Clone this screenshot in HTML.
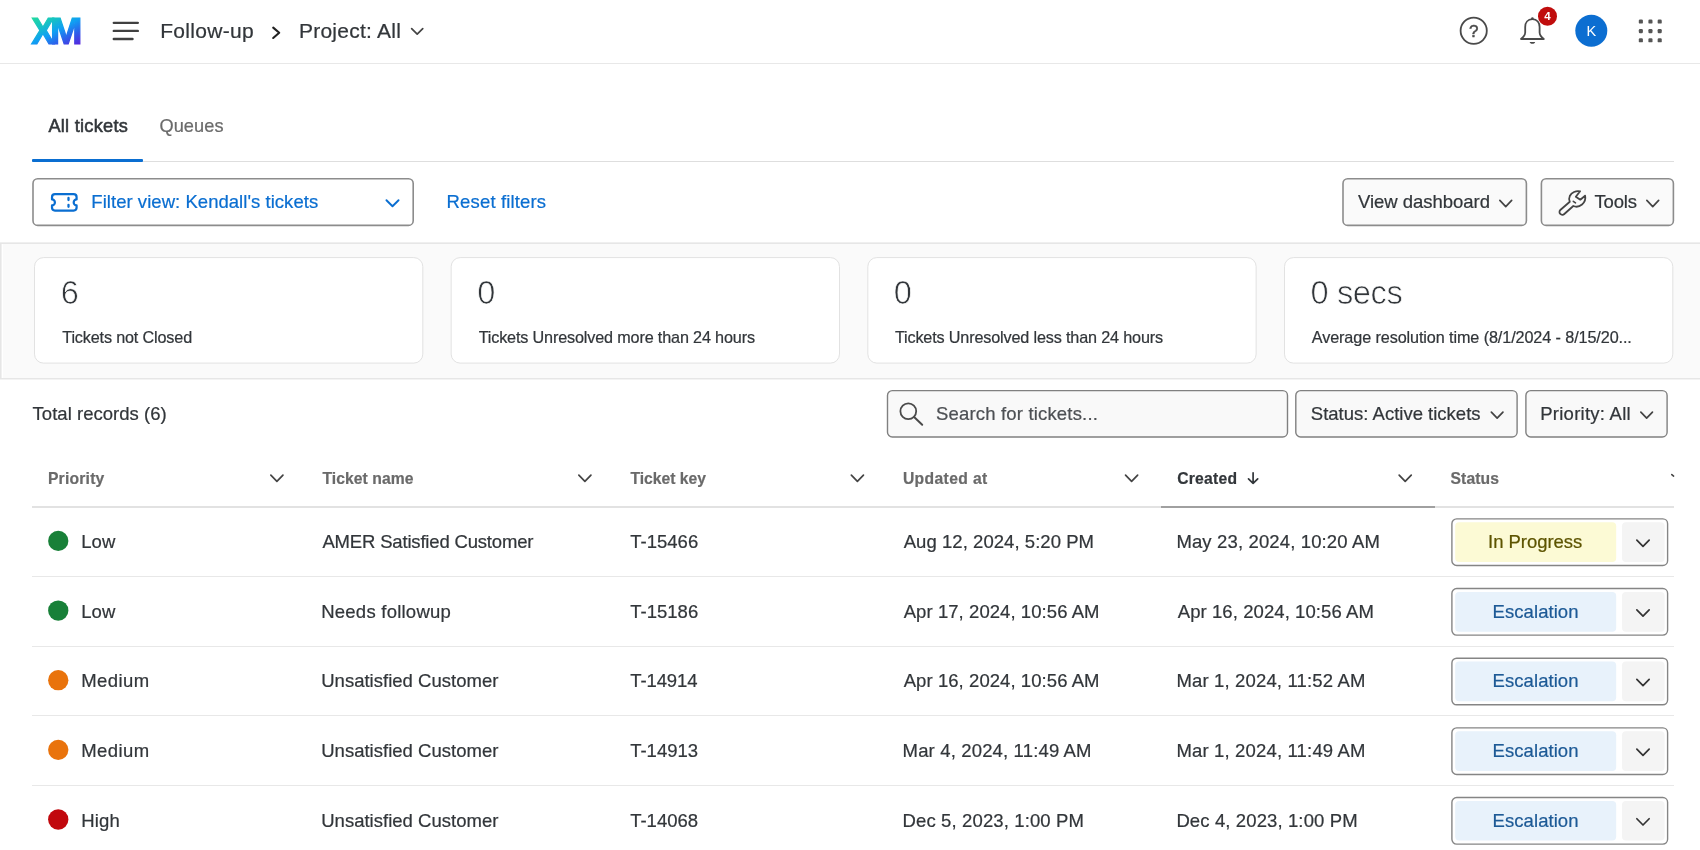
<!DOCTYPE html>
<html lang="en">
<head>
<meta charset="utf-8">
<title>Follow-up - Tickets</title>
<style>
*{box-sizing:border-box;margin:0;padding:0}
html,body{width:1700px;height:850px;overflow:hidden;background:#fff}
body{font-family:"Liberation Sans",sans-serif;color:#32363a;position:relative}
html{filter:grayscale(0)}
.a{position:absolute}
.t{position:absolute;white-space:nowrap;line-height:1}
</style>
</head>
<body>
<div class="a" style="left:0;top:0;width:1700px;height:64px;border-bottom:1px solid #e8e8e8"></div>
<svg class="a" style="left:26px;top:12px" width="60" height="38" viewBox="0 0 60 38">
<defs><linearGradient id="g" gradientUnits="userSpaceOnUse" x1="5" y1="5" x2="27.300" y2="47.200"><stop offset="0" stop-color="#23dc9c"/><stop offset="0.25" stop-color="#16c4c0"/><stop offset="0.5" stop-color="#0fa0f3"/><stop offset="0.75" stop-color="#2f5cea"/><stop offset="1" stop-color="#5a22dc"/></linearGradient></defs>
<g font-family="Liberation Sans, sans-serif" font-weight="bold" font-size="37.100" fill="url(#g)" stroke="url(#g)" stroke-width="1.200" stroke-linejoin="miter"><text id="lx" x="5.200" y="31.500" textLength="23.300" lengthAdjust="spacingAndGlyphs">X</text><text id="lm" x="24" y="31.500" textLength="32.400" lengthAdjust="spacingAndGlyphs">M</text></g></svg>
<svg class="a" style="left:111px;top:20px" width="30" height="22" viewBox="0 0 30 22"><path d="M2.800 2.850H26.800M2.800 10.900H26.800M2.800 19H21.500" stroke="#404040" stroke-width="2.400" stroke-linecap="round" fill="none"/></svg>
<svg class="a" style="left:270px;top:24px" width="13" height="17" viewBox="0 0 13 17"><path d="M3.200 3.600L9.200 8.800L3.200 14" stroke="#222" stroke-width="2.100" fill="none" stroke-linecap="round" stroke-linejoin="round"/></svg>
<svg class="a" style="left:409px;top:26px" width="16" height="11" viewBox="0 0 16 11"><path d="M2.65 2.65L8.20 8.20L13.75 2.65" stroke="#444" stroke-width="1.7" fill="none" stroke-linecap="round" stroke-linejoin="round"/></svg>
<svg class="a" style="left:1458px;top:15px" width="32" height="32" viewBox="0 0 32 32"><circle cx="15.700" cy="15.750" r="13.100" stroke="#4a4a4a" stroke-width="1.800" fill="none"/><text x="15.700" y="22" text-anchor="middle" font-family="Liberation Sans, sans-serif" font-size="17" fill="#4a4a4a" stroke="#4a4a4a" stroke-width="0.500">?</text></svg>
<svg class="a" style="left:1518px;top:15px" width="30" height="31" viewBox="0 0 30 31"><path d="M14.400 4.200C9.600 4.200 7.200 7.800 7.200 12V17.500C7.200 20.500 5.200 22.300 3 24H25.800C23.600 22.300 21.600 20.500 21.600 17.500V12C21.600 7.800 19.200 4.200 14.400 4.200Z" stroke="#4a4a4a" stroke-width="1.800" fill="none" stroke-linejoin="round"/><circle cx="14.400" cy="3.600" r="1.300" fill="#4a4a4a"/><path d="M11.700 26.900H17.100C17.100 28 15.900 28.800 14.400 28.800C12.900 28.800 11.700 28 11.700 26.900Z" fill="#4a4a4a"/></svg>
<svg class="a" style="left:1536px;top:5px" width="24" height="24" viewBox="0 0 24 24"><circle cx="11.500" cy="11.200" r="9.500" fill="#c00d0d"/></svg>
<svg class="a" style="left:1573px;top:12px" width="38" height="38" viewBox="0 0 38 38"><circle cx="18.300" cy="18.700" r="16" fill="#0c6ed1"/></svg>
<svg class="a" style="left:1636px;top:17px" width="28" height="28" viewBox="0 0 28 28" fill="#555"><rect x="2.80" y="2.50" width="4.100" height="4.100" rx="1.200"/><rect x="12.40" y="2.50" width="4.100" height="4.100" rx="1.200"/><rect x="21.65" y="2.50" width="4.100" height="4.100" rx="1.200"/><rect x="2.80" y="12.05" width="4.100" height="4.100" rx="1.200"/><rect x="12.40" y="12.05" width="4.100" height="4.100" rx="1.200"/><rect x="21.65" y="12.05" width="4.100" height="4.100" rx="1.200"/><rect x="2.80" y="21.25" width="4.100" height="4.100" rx="1.200"/><rect x="12.40" y="21.25" width="4.100" height="4.100" rx="1.200"/><rect x="21.65" y="21.25" width="4.100" height="4.100" rx="1.200"/></svg>
<div class="a" style="left:32px;top:161px;width:1642px;height:1px;background:#dedede"></div>
<div class="a" style="left:32px;top:159px;width:111px;height:3px;background:#0a6ed1;border-radius:1px"></div>
<svg class="a" style="left:31px;top:177px" width="384" height="51" viewBox="0 0 384 51"><rect x="2.00" y="1.80" width="380.20" height="46.60" rx="4.70" fill="#fff" stroke="#8c8c8c" stroke-width="1.6"/></svg>
<svg class="a" style="left:49px;top:191px" width="31" height="23" viewBox="0 0 31 23"><path d="M6 3.200H24.600C26.300 3.200 27.600 4.500 27.600 6.200V8.400C26 8.400 24.700 9.800 24.700 11.400C24.700 13 26 14.400 27.600 14.400V16.600C27.600 18.300 26.300 19.600 24.600 19.600H6C4.300 19.600 3 18.300 3 16.600V14.400C4.600 14.400 5.900 13 5.900 11.400C5.900 9.800 4.600 8.400 3 8.400V6.200C3 4.500 4.300 3.200 6 3.200Z" stroke="#0a6ed1" stroke-width="2.200" fill="none" stroke-linejoin="round"/><path d="M19.500 7V9M19.500 13.800V15.800" stroke="#0a6ed1" stroke-width="2.300" stroke-linecap="round"/></svg>
<svg class="a" style="left:384px;top:198px" width="17" height="11" viewBox="0 0 17 11"><path d="M2.45 2.25L8.50 8.27L14.55 2.25" stroke="#0a6ed1" stroke-width="1.9" fill="none" stroke-linecap="round" stroke-linejoin="round"/></svg>
<svg class="a" style="left:1341px;top:177px" width="188" height="51" viewBox="0 0 188 51"><rect x="2.00" y="1.80" width="183.40" height="46.60" rx="4.70" fill="#fafafa" stroke="#8c8c8c" stroke-width="1.6"/></svg>
<svg class="a" style="left:1498px;top:198px" width="16" height="11" viewBox="0 0 16 11"><path d="M1.85 2.45L7.75 8.59L13.65 2.45" stroke="#444" stroke-width="1.7" fill="none" stroke-linecap="round" stroke-linejoin="round"/></svg>
<svg class="a" style="left:1539px;top:177px" width="137" height="51" viewBox="0 0 137 51"><rect x="2.40" y="1.80" width="132.00" height="46.60" rx="4.70" fill="#fafafa" stroke="#8c8c8c" stroke-width="1.6"/></svg>
<svg class="a" style="left:1558px;top:189px" width="30" height="28" viewBox="0 0 30 28"><path d="M22.100 2.300C18 1.300 13.500 3.500 11.800 7C10.900 9 10.900 11 11.800 12.800L2.300 21C1.200 22 1.200 23.800 2.300 24.900C3.400 26 5.200 26.100 6.300 25L15.300 17C18 18.200 21.500 17.600 24 15.500C26.500 13.300 27.800 9.800 27.100 6.700L22.300 10.700L17.800 7.700Z" stroke="#444" stroke-width="1.800" fill="none" stroke-linejoin="round"/><path d="M15.300 12.300L17.500 13.900" stroke="#444" stroke-width="1.600" stroke-linecap="round"/></svg>
<svg class="a" style="left:1645px;top:198px" width="16" height="11" viewBox="0 0 16 11"><path d="M1.85 2.45L7.75 8.59L13.65 2.45" stroke="#444" stroke-width="1.7" fill="none" stroke-linecap="round" stroke-linejoin="round"/></svg>
<div class="a" style="left:0;top:242px;width:1700px;height:138px;background:#fafafa"></div>
<div class="a" style="left:0;top:242px;width:1700px;height:1px;background:#efefef"></div>
<div class="a" style="left:0;top:243px;width:1700px;height:1px;background:#e6e6e6"></div>
<div class="a" style="left:0;top:378px;width:1700px;height:1px;background:#e6e6e6"></div>
<div class="a" style="left:0;top:379px;width:1700px;height:1px;background:#f3f3f3"></div>
<div class="a" style="left:0;top:244px;width:1px;height:134px;background:#e6e6e6"></div>
<div class="a" style="left:1px;top:244px;width:1px;height:134px;background:#f0f0f0"></div>
<div class="a" style="left:2px;top:244px;width:1px;height:134px;background:#fff"></div>
<svg class="a" style="left:33px;top:256px" width="392" height="109" viewBox="0 0 392 109"><rect x="1.50" y="1.60" width="388.30" height="105.50" rx="9.00" fill="#fff" stroke="#e2e2e2" stroke-width="1"/></svg>
<svg class="a" style="left:449px;top:256px" width="392" height="109" viewBox="0 0 392 109"><rect x="2.17" y="1.60" width="388.30" height="105.50" rx="9.00" fill="#fff" stroke="#e2e2e2" stroke-width="1"/></svg>
<svg class="a" style="left:866px;top:256px" width="392" height="109" viewBox="0 0 392 109"><rect x="1.84" y="1.60" width="388.30" height="105.50" rx="9.00" fill="#fff" stroke="#e2e2e2" stroke-width="1"/></svg>
<svg class="a" style="left:1283px;top:256px" width="392" height="109" viewBox="0 0 392 109"><rect x="1.51" y="1.60" width="388.30" height="105.50" rx="9.00" fill="#fff" stroke="#e2e2e2" stroke-width="1"/></svg>
<svg class="a" style="left:885px;top:388px" width="405" height="51" viewBox="0 0 405 51"><rect x="2.50" y="2.60" width="400.00" height="46.40" rx="4.80" fill="#f9f9f9" stroke="#808080" stroke-width="1.4"/></svg>
<svg class="a" style="left:898px;top:401px" width="27" height="27" viewBox="0 0 27 27"><circle cx="10.300" cy="10.200" r="7.900" stroke="#4a4a4a" stroke-width="1.800" fill="none"/><path d="M16.100 16.100L24.200 23.700" stroke="#4a4a4a" stroke-width="2" stroke-linecap="round"/></svg>
<svg class="a" style="left:1294px;top:388px" width="225" height="51" viewBox="0 0 225 51"><rect x="1.80" y="2.60" width="221.30" height="46.40" rx="4.80" fill="#f9f9f9" stroke="#808080" stroke-width="1.4"/></svg>
<svg class="a" style="left:1489px;top:410px" width="16" height="11" viewBox="0 0 16 11"><path d="M2.35 2.05L8.15 8.09L13.95 2.05" stroke="#444" stroke-width="1.7" fill="none" stroke-linecap="round" stroke-linejoin="round"/></svg>
<svg class="a" style="left:1524px;top:388px" width="145" height="51" viewBox="0 0 145 51"><rect x="1.90" y="2.60" width="141.20" height="46.40" rx="4.80" fill="#f9f9f9" stroke="#808080" stroke-width="1.4"/></svg>
<svg class="a" style="left:1639px;top:410px" width="16" height="11" viewBox="0 0 16 11"><path d="M1.85 2.05L7.65 8.09L13.45 2.05" stroke="#444" stroke-width="1.7" fill="none" stroke-linecap="round" stroke-linejoin="round"/></svg>
<svg class="a" style="left:269px;top:473px" width="16" height="11" viewBox="0 0 16 11"><path d="M1.85 2.15L7.90 8.40L13.95 2.15" stroke="#444" stroke-width="1.7" fill="none" stroke-linecap="round" stroke-linejoin="round"/></svg>
<svg class="a" style="left:577px;top:473px" width="16" height="11" viewBox="0 0 16 11"><path d="M1.85 2.15L7.90 8.40L13.95 2.15" stroke="#444" stroke-width="1.7" fill="none" stroke-linecap="round" stroke-linejoin="round"/></svg>
<svg class="a" style="left:849px;top:473px" width="17" height="11" viewBox="0 0 17 11"><path d="M2.35 2.15L8.40 8.40L14.45 2.15" stroke="#444" stroke-width="1.7" fill="none" stroke-linecap="round" stroke-linejoin="round"/></svg>
<svg class="a" style="left:1123px;top:473px" width="17" height="11" viewBox="0 0 17 11"><path d="M2.55 2.15L8.60 8.40L14.65 2.15" stroke="#444" stroke-width="1.7" fill="none" stroke-linecap="round" stroke-linejoin="round"/></svg>
<svg class="a" style="left:1397px;top:473px" width="17" height="11" viewBox="0 0 17 11"><path d="M2.15 2.15L8.20 8.40L14.25 2.15" stroke="#444" stroke-width="1.7" fill="none" stroke-linecap="round" stroke-linejoin="round"/></svg>
<svg class="a" style="left:1246px;top:470px" width="14" height="16" viewBox="0 0 14 16"><path d="M7.100 2.800V13.300M2.500 8.800L7.100 13.400L11.700 8.800" stroke="#32363a" stroke-width="1.700" fill="none" stroke-linecap="round" stroke-linejoin="round"/></svg>
<svg class="a" style="left:1669px;top:472px" width="7" height="7" viewBox="0 0 7 7"><path d="M2.800 2.600L4.600 4.100" stroke="#444" stroke-width="1.600" stroke-linecap="round"/></svg>
<div class="a" style="left:32px;top:506px;width:1642px;height:2px;background:#e2e2e2"></div>
<div class="a" style="left:1161px;top:506px;width:274px;height:2px;background:#a0a0a0"></div>
<div class="a" style="left:32px;top:576px;width:1642px;height:1px;background:#e8e8e8"></div>
<div class="a" style="left:32px;top:646px;width:1642px;height:1px;background:#e8e8e8"></div>
<div class="a" style="left:32px;top:715px;width:1642px;height:1px;background:#e8e8e8"></div>
<div class="a" style="left:32px;top:785px;width:1642px;height:1px;background:#e8e8e8"></div>
<svg class="a" style="left:46px;top:528px" width="26" height="27" viewBox="0 0 26 27"><circle cx="12.250" cy="12.90" r="10.150" fill="#188038"/></svg>
<svg class="a" style="left:1450px;top:517px" width="220" height="51" viewBox="0 0 220 51"><rect x="1.90" y="1.90" width="215.70" height="46.60" rx="4.80" fill="#fff" stroke="#858585" stroke-width="1.4"/><rect x="5.20" y="5.30" width="161.00" height="39.70" rx="4" fill="#fcfad5"/><rect x="172.00" y="5.30" width="42.60" height="39.70" rx="4" fill="#f4f4f4"/></svg>
<svg class="a" style="left:1635px;top:538px" width="16" height="11" viewBox="0 0 16 11"><path d="M1.85 2.15L8.00 8.39L14.15 2.15" stroke="#333" stroke-width="1.7" fill="none" stroke-linecap="round" stroke-linejoin="round"/></svg>
<svg class="a" style="left:46px;top:597px" width="26" height="27" viewBox="0 0 26 27"><circle cx="12.250" cy="13.55" r="10.150" fill="#188038"/></svg>
<svg class="a" style="left:1450px;top:586px" width="220" height="51" viewBox="0 0 220 51"><rect x="1.90" y="2.55" width="215.70" height="46.60" rx="4.80" fill="#fff" stroke="#858585" stroke-width="1.4"/><rect x="5.20" y="5.95" width="161.00" height="39.70" rx="4" fill="#e8f2fb"/><rect x="172.00" y="5.95" width="42.60" height="39.70" rx="4" fill="#f4f4f4"/></svg>
<svg class="a" style="left:1635px;top:607px" width="16" height="12" viewBox="0 0 16 12"><path d="M1.85 2.80L8.00 9.04L14.15 2.80" stroke="#333" stroke-width="1.7" fill="none" stroke-linecap="round" stroke-linejoin="round"/></svg>
<svg class="a" style="left:46px;top:667px" width="26" height="27" viewBox="0 0 26 27"><circle cx="12.250" cy="13.20" r="10.150" fill="#e9730c"/></svg>
<svg class="a" style="left:1450px;top:656px" width="220" height="51" viewBox="0 0 220 51"><rect x="1.90" y="2.20" width="215.70" height="46.60" rx="4.80" fill="#fff" stroke="#858585" stroke-width="1.4"/><rect x="5.20" y="5.60" width="161.00" height="39.70" rx="4" fill="#e8f2fb"/><rect x="172.00" y="5.60" width="42.60" height="39.70" rx="4" fill="#f4f4f4"/></svg>
<svg class="a" style="left:1635px;top:677px" width="16" height="11" viewBox="0 0 16 11"><path d="M1.85 2.45L8.00 8.69L14.15 2.45" stroke="#333" stroke-width="1.7" fill="none" stroke-linecap="round" stroke-linejoin="round"/></svg>
<svg class="a" style="left:46px;top:736px" width="26" height="27" viewBox="0 0 26 27"><circle cx="12.250" cy="13.85" r="10.150" fill="#e9730c"/></svg>
<svg class="a" style="left:1450px;top:726px" width="220" height="51" viewBox="0 0 220 51"><rect x="1.90" y="1.85" width="215.70" height="46.60" rx="4.80" fill="#fff" stroke="#858585" stroke-width="1.4"/><rect x="5.20" y="5.25" width="161.00" height="39.70" rx="4" fill="#e8f2fb"/><rect x="172.00" y="5.25" width="42.60" height="39.70" rx="4" fill="#f4f4f4"/></svg>
<svg class="a" style="left:1635px;top:747px" width="16" height="11" viewBox="0 0 16 11"><path d="M1.85 2.10L8.00 8.34L14.15 2.10" stroke="#333" stroke-width="1.7" fill="none" stroke-linecap="round" stroke-linejoin="round"/></svg>
<svg class="a" style="left:46px;top:806px" width="26" height="27" viewBox="0 0 26 27"><circle cx="12.250" cy="13.50" r="10.150" fill="#c1080d"/></svg>
<svg class="a" style="left:1450px;top:795px" width="220" height="51" viewBox="0 0 220 51"><rect x="1.90" y="2.50" width="215.70" height="46.60" rx="4.80" fill="#fff" stroke="#858585" stroke-width="1.4"/><rect x="5.20" y="5.90" width="161.00" height="39.70" rx="4" fill="#e8f2fb"/><rect x="172.00" y="5.90" width="42.60" height="39.70" rx="4" fill="#f4f4f4"/></svg>
<svg class="a" style="left:1635px;top:816px" width="16" height="12" viewBox="0 0 16 12"><path d="M1.85 2.75L8.00 8.99L14.15 2.75" stroke="#333" stroke-width="1.7" fill="none" stroke-linecap="round" stroke-linejoin="round"/></svg>
<div class="t" style="left:1538px;top:7px;width:19px;height:19px;line-height:19px;text-align:center;color:#fff;font-size:11.500px;font-weight:bold">4</div>
<div class="t" style="left:1575px;top:15px;width:32.600px;height:32px;line-height:32px;text-align:center;color:#fff;font-size:14.500px">K</div>
<div class="t" id="h1" style="left:160.18px;top:20.26px;font-size:21px;color:#32363a;letter-spacing:0.317px;-webkit-text-stroke:0.22px #32363a;">Follow-up</div>
<div class="t" id="h2" style="left:298.91px;top:20.26px;font-size:21px;color:#32363a;letter-spacing:0.259px;-webkit-text-stroke:0.22px #32363a;">Project: All</div>
<div class="t" id="tab1" style="left:48.43px;top:117.26px;font-size:18.2px;color:#32363a;letter-spacing:0.260px;-webkit-text-stroke:0.55px #32363a;">All tickets</div>
<div class="t" id="tab2" style="left:159.44px;top:117.26px;font-size:18.2px;color:#6b6b6b;letter-spacing:0.087px;-webkit-text-stroke:0.22px #6b6b6b;">Queues</div>
<div class="t" id="f1" style="left:91.33px;top:193.26px;font-size:18.5px;color:#0a6ed1;letter-spacing:0.042px;-webkit-text-stroke:0.22px #0a6ed1;">Filter view: Kendall's tickets</div>
<div class="t" id="f2" style="left:446.60px;top:193.26px;font-size:18.5px;color:#0a6ed1;letter-spacing:0.155px;-webkit-text-stroke:0.22px #0a6ed1;">Reset filters</div>
<div class="t" id="f3" style="left:1358.02px;top:193.26px;font-size:18.5px;color:#32363a;letter-spacing:-0.032px;-webkit-text-stroke:0.22px #32363a;">View dashboard</div>
<div class="t" id="f4" style="left:1594.39px;top:193.26px;font-size:18.5px;color:#32363a;letter-spacing:-0.115px;-webkit-text-stroke:0.22px #32363a;">Tools</div>
<div class="t" id="n1" style="left:60.63px;top:277.26px;font-size:32.6px;color:#32363a;letter-spacing:0.000px;-webkit-text-stroke:0.7px #fff;">6</div>
<div class="t" id="n2" style="left:477.24px;top:277.26px;font-size:32.6px;color:#32363a;letter-spacing:0.000px;-webkit-text-stroke:0.7px #fff;">0</div>
<div class="t" id="n3" style="left:893.66px;top:277.26px;font-size:32.6px;color:#32363a;letter-spacing:0.000px;-webkit-text-stroke:0.7px #fff;">0</div>
<div class="t" id="n4" style="left:1310.53px;top:277.26px;font-size:32.6px;color:#32363a;letter-spacing:-0.368px;-webkit-text-stroke:0.7px #fff;">0 secs</div>
<div class="t" id="l1" style="left:62.25px;top:329.26px;font-size:16.2px;color:#32363a;letter-spacing:-0.156px;-webkit-text-stroke:0.22px #32363a;">Tickets not Closed</div>
<div class="t" id="l2" style="left:478.68px;top:329.26px;font-size:16.2px;color:#32363a;letter-spacing:-0.156px;-webkit-text-stroke:0.22px #32363a;">Tickets Unresolved more than 24 hours</div>
<div class="t" id="l3" style="left:894.91px;top:329.26px;font-size:16.2px;color:#32363a;letter-spacing:-0.157px;-webkit-text-stroke:0.22px #32363a;">Tickets Unresolved less than 24 hours</div>
<div class="t" id="l4" style="left:1311.79px;top:329.26px;font-size:16.2px;color:#32363a;letter-spacing:-0.100px;-webkit-text-stroke:0.22px #32363a;">Average resolution time (8/1/2024 - 8/15/20...</div>
<div class="t" id="s0" style="left:32.58px;top:405.26px;font-size:18.5px;color:#32363a;letter-spacing:0.026px;-webkit-text-stroke:0.22px #32363a;">Total records (6)</div>
<div class="t" id="s1" style="left:935.94px;top:405.26px;font-size:18.5px;color:#4d5054;letter-spacing:0.179px;-webkit-text-stroke:0.22px #4d5054;">Search for tickets...</div>
<div class="t" id="s2" style="left:1310.83px;top:405.26px;font-size:18.5px;color:#32363a;letter-spacing:0.002px;-webkit-text-stroke:0.22px #32363a;">Status: Active tickets</div>
<div class="t" id="s3" style="left:1540.22px;top:405.26px;font-size:18.5px;color:#32363a;letter-spacing:0.254px;-webkit-text-stroke:0.22px #32363a;">Priority: All</div>
<div class="t" id="th1" style="left:47.92px;top:471.26px;font-size:15.7px;color:#6a6a6a;letter-spacing:0.208px;font-weight:bold;-webkit-text-stroke:0.2px #6a6a6a;">Priority</div>
<div class="t" id="th2" style="left:322.42px;top:471.26px;font-size:15.7px;color:#6a6a6a;letter-spacing:0.061px;font-weight:bold;-webkit-text-stroke:0.2px #6a6a6a;">Ticket name</div>
<div class="t" id="th3" style="left:630.42px;top:471.26px;font-size:15.7px;color:#6a6a6a;letter-spacing:-0.012px;font-weight:bold;-webkit-text-stroke:0.2px #6a6a6a;">Ticket key</div>
<div class="t" id="th4" style="left:902.92px;top:471.26px;font-size:15.7px;color:#6a6a6a;letter-spacing:0.363px;font-weight:bold;-webkit-text-stroke:0.2px #6a6a6a;">Updated at</div>
<div class="t" id="th5" style="left:1177.20px;top:471.26px;font-size:15.7px;color:#32363a;letter-spacing:0.227px;font-weight:bold;-webkit-text-stroke:0.2px #32363a;">Created</div>
<div class="t" id="th6" style="left:1450.55px;top:471.26px;font-size:15.7px;color:#6a6a6a;letter-spacing:0.074px;font-weight:bold;-webkit-text-stroke:0.2px #6a6a6a;">Status</div>
<div class="t" id="r0p" style="left:81.21px;top:533.26px;font-size:18.5px;color:#32363a;letter-spacing:0.120px;-webkit-text-stroke:0.22px #32363a;">Low</div>
<div class="t" id="r0n" style="left:322.45px;top:533.26px;font-size:18.5px;color:#32363a;letter-spacing:-0.177px;-webkit-text-stroke:0.22px #32363a;">AMER Satisfied Customer</div>
<div class="t" id="r0k" style="left:630.22px;top:533.26px;font-size:18.5px;color:#32363a;letter-spacing:0.015px;-webkit-text-stroke:0.22px #32363a;">T-15466</div>
<div class="t" id="r0u" style="left:903.73px;top:533.26px;font-size:18.5px;color:#32363a;letter-spacing:0.052px;-webkit-text-stroke:0.22px #32363a;">Aug 12, 2024, 5:20 PM</div>
<div class="t" id="r0c" style="left:1176.39px;top:533.26px;font-size:18.5px;color:#32363a;letter-spacing:0.141px;-webkit-text-stroke:0.22px #32363a;">May 23, 2024, 10:20 AM</div>
<div class="t" id="r0s" style="left:1488.05px;top:533.26px;font-size:18.5px;color:#5d5400;letter-spacing:-0.042px;-webkit-text-stroke:0.22px #5d5400;">In Progress</div>
<div class="t" id="r1p" style="left:81.21px;top:603.26px;font-size:18.5px;color:#32363a;letter-spacing:0.120px;-webkit-text-stroke:0.22px #32363a;">Low</div>
<div class="t" id="r1n" style="left:321.21px;top:603.26px;font-size:18.5px;color:#32363a;letter-spacing:0.240px;-webkit-text-stroke:0.22px #32363a;">Needs followup</div>
<div class="t" id="r1k" style="left:630.22px;top:603.26px;font-size:18.5px;color:#32363a;letter-spacing:0.015px;-webkit-text-stroke:0.22px #32363a;">T-15186</div>
<div class="t" id="r1u" style="left:903.73px;top:603.26px;font-size:18.5px;color:#32363a;letter-spacing:0.066px;-webkit-text-stroke:0.22px #32363a;">Apr 17, 2024, 10:56 AM</div>
<div class="t" id="r1c" style="left:1177.73px;top:603.26px;font-size:18.5px;color:#32363a;letter-spacing:0.084px;-webkit-text-stroke:0.22px #32363a;">Apr 16, 2024, 10:56 AM</div>
<div class="t" id="r1s" style="left:1492.60px;top:603.26px;font-size:18.5px;color:#1d5a96;letter-spacing:0.060px;-webkit-text-stroke:0.22px #1d5a96;">Escalation</div>
<div class="t" id="r2p" style="left:81.21px;top:672.26px;font-size:18.5px;color:#32363a;letter-spacing:0.420px;-webkit-text-stroke:0.22px #32363a;">Medium</div>
<div class="t" id="r2n" style="left:321.23px;top:672.26px;font-size:18.5px;color:#32363a;letter-spacing:0.015px;-webkit-text-stroke:0.22px #32363a;">Unsatisfied Customer</div>
<div class="t" id="r2k" style="left:630.22px;top:672.26px;font-size:18.5px;color:#32363a;letter-spacing:-0.104px;-webkit-text-stroke:0.22px #32363a;">T-14914</div>
<div class="t" id="r2u" style="left:903.73px;top:672.26px;font-size:18.5px;color:#32363a;letter-spacing:0.066px;-webkit-text-stroke:0.22px #32363a;">Apr 16, 2024, 10:56 AM</div>
<div class="t" id="r2c" style="left:1176.39px;top:672.26px;font-size:18.5px;color:#32363a;letter-spacing:0.157px;-webkit-text-stroke:0.22px #32363a;">Mar 1, 2024, 11:52 AM</div>
<div class="t" id="r2s" style="left:1492.60px;top:672.26px;font-size:18.5px;color:#1d5a96;letter-spacing:0.060px;-webkit-text-stroke:0.22px #1d5a96;">Escalation</div>
<div class="t" id="r3p" style="left:81.21px;top:742.26px;font-size:18.5px;color:#32363a;letter-spacing:0.420px;-webkit-text-stroke:0.22px #32363a;">Medium</div>
<div class="t" id="r3n" style="left:321.23px;top:742.26px;font-size:18.5px;color:#32363a;letter-spacing:0.015px;-webkit-text-stroke:0.22px #32363a;">Unsatisfied Customer</div>
<div class="t" id="r3k" style="left:630.22px;top:742.26px;font-size:18.5px;color:#32363a;letter-spacing:-0.020px;-webkit-text-stroke:0.22px #32363a;">T-14913</div>
<div class="t" id="r3u" style="left:902.59px;top:742.26px;font-size:18.5px;color:#32363a;letter-spacing:0.157px;-webkit-text-stroke:0.22px #32363a;">Mar 4, 2024, 11:49 AM</div>
<div class="t" id="r3c" style="left:1176.39px;top:742.26px;font-size:18.5px;color:#32363a;letter-spacing:0.166px;-webkit-text-stroke:0.22px #32363a;">Mar 1, 2024, 11:49 AM</div>
<div class="t" id="r3s" style="left:1492.60px;top:742.26px;font-size:18.5px;color:#1d5a96;letter-spacing:0.060px;-webkit-text-stroke:0.22px #1d5a96;">Escalation</div>
<div class="t" id="r4p" style="left:81.21px;top:812.26px;font-size:18.5px;color:#32363a;letter-spacing:0.219px;-webkit-text-stroke:0.22px #32363a;">High</div>
<div class="t" id="r4n" style="left:321.23px;top:812.26px;font-size:18.5px;color:#32363a;letter-spacing:0.015px;-webkit-text-stroke:0.22px #32363a;">Unsatisfied Customer</div>
<div class="t" id="r4k" style="left:630.22px;top:812.26px;font-size:18.5px;color:#32363a;letter-spacing:-0.018px;-webkit-text-stroke:0.22px #32363a;">T-14068</div>
<div class="t" id="r4u" style="left:902.59px;top:812.26px;font-size:18.5px;color:#32363a;letter-spacing:0.126px;-webkit-text-stroke:0.22px #32363a;">Dec 5, 2023, 1:00 PM</div>
<div class="t" id="r4c" style="left:1176.39px;top:812.26px;font-size:18.5px;color:#32363a;letter-spacing:0.119px;-webkit-text-stroke:0.22px #32363a;">Dec 4, 2023, 1:00 PM</div>
<div class="t" id="r4s" style="left:1492.60px;top:812.26px;font-size:18.5px;color:#1d5a96;letter-spacing:0.060px;-webkit-text-stroke:0.22px #1d5a96;">Escalation</div>
</body>
</html>
